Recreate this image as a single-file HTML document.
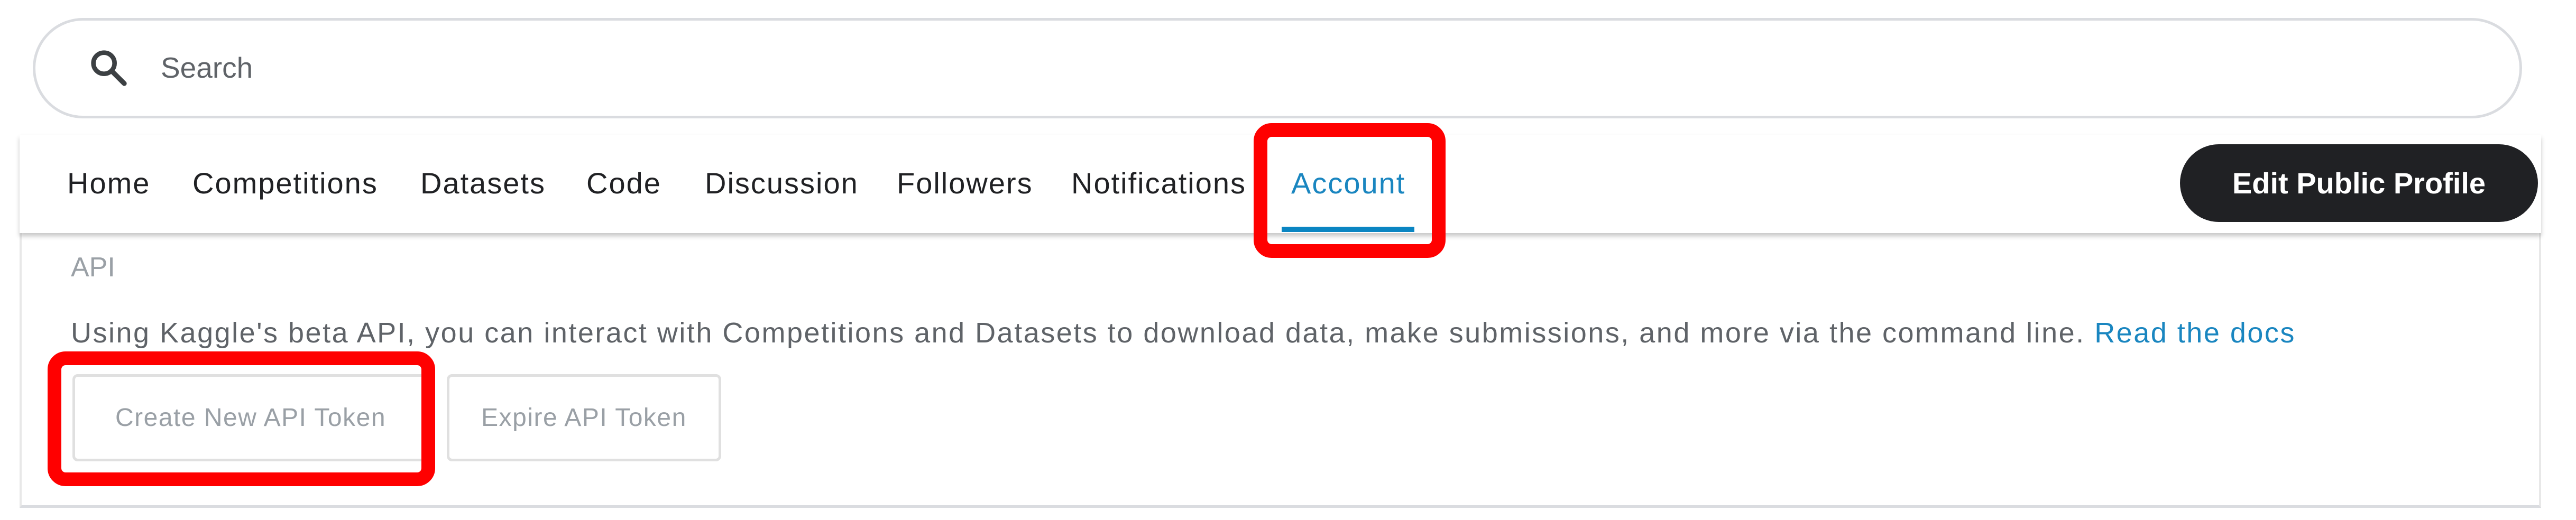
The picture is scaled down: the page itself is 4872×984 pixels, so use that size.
<!DOCTYPE html>
<html><head><meta charset="utf-8"><style>
*{margin:0;padding:0;box-sizing:border-box}
body{width:4872px;height:984px;background:#fff;position:relative;overflow:hidden;font-family:"Liberation Sans",sans-serif}
.a{position:absolute;white-space:nowrap}
.search{left:62px;top:34px;width:4708px;height:190px;border:5px solid #dadce0;border-radius:95px}
.nav{left:37px;top:255px;width:4769px;height:186px;background:#fff;box-shadow:0 6px 8px rgba(0,0,0,.22)}
.content{left:37px;top:441px;width:4769px;height:520px;border-left:4px solid #e8e8e8;border-right:4px solid #e8e8e8;border-bottom:5px solid #dadce0}
.ni{top:314px;font-size:56px;letter-spacing:2px;color:#202124}
.btn{top:708px;height:165px;border:5px solid #e0e0e0;border-radius:10px;font-size:48px;letter-spacing:1.5px;color:#9aa0a6;display:flex;align-items:center;justify-content:center}
.red{border:26px solid #f00;border-radius:34px}
</style></head><body>
<div class="a search"></div>
<svg class="a" style="left:165px;top:88px" width="80" height="80" viewBox="0 0 24 24"><circle cx="9.5" cy="9.5" r="6" fill="none" stroke="#3c4043" stroke-width="2.6"/><path d="M14 14 L21 21" stroke="#3c4043" stroke-width="2.8" stroke-linecap="round"/></svg>
<div class="a" style="left:304px;top:96px;font-size:55px;color:#5f6368">Search</div>
<div class="a content"></div>
<div class="a nav"></div>
<div class="a ni" style="left:127px">Home</div>
<div class="a ni" style="left:364px">Competitions</div>
<div class="a ni" style="left:795px">Datasets</div>
<div class="a ni" style="left:1109px">Code</div>
<div class="a ni" style="left:1333px">Discussion</div>
<div class="a ni" style="left:1696px">Followers</div>
<div class="a ni" style="left:2026px">Notifications</div>
<div class="a ni" style="left:2442px;color:#1a86c0">Account</div>
<div class="a" style="left:2424px;top:429px;width:251px;height:10px;background:#0a85c2"></div>
<div class="a" style="left:4123px;top:273px;width:677px;height:147px;background:#202124;border-radius:74px;color:#fff;font-weight:bold;font-size:56px;display:flex;align-items:center;justify-content:center">Edit Public Profile</div>
<div class="a" style="left:134px;top:476px;font-size:52px;color:#9aa0a6">API</div>
<div class="a" style="left:134px;top:599px;font-size:54px;color:#5f6368;letter-spacing:2.5px">Using Kaggle's beta API, you can interact with Competitions and Datasets to download data, make submissions, and more via the command line. <span style="color:#1a86c0">Read the docs</span></div>
<div class="a btn" style="left:137px;width:674px">Create New API Token</div>
<div class="a btn" style="left:845px;width:519px">Expire API Token</div>
<div class="a red" style="left:2371px;top:233px;width:363px;height:255px"></div>
<div class="a red" style="left:90px;top:665px;width:733px;height:255px"></div>
</body></html>
